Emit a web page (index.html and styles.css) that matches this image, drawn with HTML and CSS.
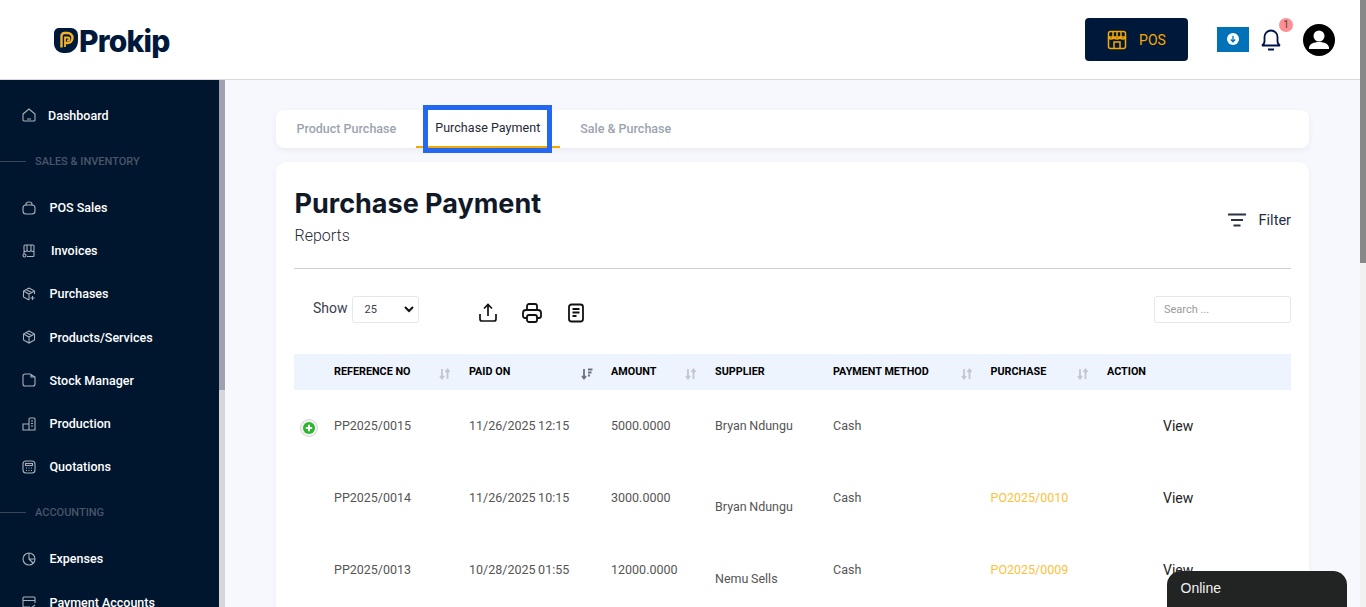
FILE: index.html
```html
<!DOCTYPE html>
<html lang="en">
<head>
    <meta charset="UTF-8">
    <title>Purchase Payment - Prokip</title>
    <link rel="stylesheet" href="styles.css">
</head>
<body>
<div class="page">
    <div class="app">
        <header class="topbar">
            <a class="logo">
                <svg class="logo-mark" width="24" height="25" viewBox="0 0 24 25">
                    <path d="M5 0h12a7 7 0 0 1 7 7v6a12 12 0 0 1-12 12h-3a9 9 0 0 1-9-9V5a5 5 0 0 1 5-5z" fill="#00193a"/>
                    <path d="M7.500 19.500V8a3 3 0 0 1 3-3H13.500a5 5 0 0 1 0 10H11" fill="none" stroke="#f5b324" stroke-width="2.400"/>
                    <path d="M11 19v-9.500h3a1.500 1.500 0 0 1 0 3h-1" fill="none" stroke="#f5b324" stroke-width="1.800"/>
                </svg>
                <span class="logo-text">Prokip</span>
            </a>
            <div class="topbar-right">
                <button class="pos-btn">
                    <svg width="20" height="20" viewBox="0 0 20 20" fill="none" stroke="#f5a800" stroke-width="1.500">
                        <rect x="1.500" y="1.500" width="17" height="17" rx="2"/>
                        <path d="M1.500 7h17M6 2v5M10 2v5M14 2v5M1.500 7c0 2.500 5.500 2.500 5.500 0 0 2.500 6 2.500 6 0 0 2.500 5.500 2.500 5.500 0M7 18v-6h6v6"/>
                    </svg>
                    <span>POS</span>
                </button>
                <div class="download-btn">
                    <svg width="12" height="12" viewBox="0 0 12 12">
                        <circle cx="6" cy="6" r="6" fill="#fff"/>
                        <path d="M6 2.800v6M3.800 6.500 6 8.800l2.200-2.300" fill="none" stroke="#0272b8" stroke-width="1.300"/>
                    </svg>
                </div>
                <div class="bell">
                    <svg width="20" height="22" viewBox="0 0 20 22" fill="none" stroke="#00124a" stroke-width="1.800">
                        <path d="M1 16.500h18c-2-1-2.500-2.500-2.500-4.500V8a6.500 6.500 0 0 0-13 0v4c0 2-.5 3.500-2.500 4.500zM7 20.500h6"/>
                    </svg>
                    <span class="badge">1</span>
                </div>
                <svg class="avatar" width="32" height="32" viewBox="0 0 32 32">
                    <circle cx="16" cy="16" r="16" fill="#000"/>
                    <circle cx="16" cy="12" r="5.500" fill="#fff"/>
                    <path d="M6 24c0-4 5-6 10-6s10 2 10 6v1H6z" fill="#fff"/>
                </svg>
            </div>
        </header>
        <div class="body">
            <nav class="sidebar">
                <a class="nav-item nav-first">
                    <svg class="nav-icon" viewBox="0 0 14 14"><path d="M1 6l6-5 6 5v6a1 1 0 0 1-1 1H2a1 1 0 0 1-1-1zM5 11h4"/></svg>
                    <span class="nav-dash">Dashboard</span>
                </a>
                <div class="nav-section"><i></i><span>SALES &amp; INVENTORY</span></div>
                <a class="nav-item">
                    <svg class="nav-icon" viewBox="0 0 14 14"><rect x="1" y="4" width="12" height="9" rx="3"/><path d="M4 4.500V3a3 2 0 0 1 6 0v1.500"/></svg>
                    <span>POS Sales</span>
                </a>
                <a class="nav-item">
                    <svg class="nav-icon" viewBox="0 0 14 14"><path d="M2 6V2a1 1 0 0 1 1-1h8a1 1 0 0 1 1 1v4c0 2-3 2-3 0 0 2-4 2-4 0 0 2-3 2-3 0zM2 7v3M5 12.500h6a1 1 0 0 0 1-1V7M5 1v5M9 1v5"/><circle cx="2.500" cy="11.500" r="1.500"/></svg>
                    <span class="nav-inv">Invoices</span>
                </a>
                <a class="nav-item">
                    <svg class="nav-icon" viewBox="0 0 14 14"><path d="M7 1l5.500 3v3M7 1L1.500 4v6L7 13M1.500 4 7 7l5.500-3M7 7v6M4 2.500l5.500 3M10.500 9v4M8.500 11h4"/></svg>
                    <span>Purchases</span>
                </a>
                <a class="nav-item">
                    <svg class="nav-icon" viewBox="0 0 14 14"><path d="M7 1l5.500 3v6L7 13l-5.500-3V4zM1.500 4 7 7l5.500-3M7 7v6M4 2.500l5.500 3"/></svg>
                    <span>Products/Services</span>
                </a>
                <a class="nav-item">
                    <svg class="nav-icon" viewBox="0 0 14 14"><path d="M3 1h5l5 3v7a2 2 0 0 1-2 2H3a2 2 0 0 1-2-2V3a2 2 0 0 1 2-2zM9 1v3h4"/></svg>
                    <span>Stock Manager</span>
                </a>
                <a class="nav-item">
                    <svg class="nav-icon" viewBox="0 0 14 14"><path d="M7 13V2a1 1 0 0 1 1-1h4a1 1 0 0 1 1 1v11H1V7h6M9 4h2M9 6.500h2M9 9h2"/></svg>
                    <span>Production</span>
                </a>
                <a class="nav-item">
                    <svg class="nav-icon" viewBox="0 0 14 14"><rect x="1" y="1" width="12" height="12" rx="3"/><rect x="3.500" y="3.500" width="7" height="2"/><path d="M4 8h1M6.500 8h1M9 8h1M4 10.500h1M6.500 10.500h1M9 10.500h1"/></svg>
                    <span>Quotations</span>
                </a>
                <div class="nav-section"><i></i><span>ACCOUNTING</span></div>
                <a class="nav-item">
                    <svg class="nav-icon" viewBox="0 0 14 14"><circle cx="7" cy="7" r="6"/><path d="M7 1v6h6M7 7l4 4"/></svg>
                    <span>Expenses</span>
                </a>
                <a class="nav-item">
                    <svg class="nav-icon" viewBox="0 0 14 14"><path d="M8 12H2a1 1 0 0 1-1-1V3a1 1 0 0 1 1-1h10a1 1 0 0 1 1 1v5M1 5.500h12M9 13l4-3"/></svg>
                    <span>Payment Accounts</span>
                </a>
            </nav>
            <div class="side-scroll"><div class="side-thumb"></div></div>
            <main class="content">
                <div class="tabs">
                    <a class="tab">Product Purchase</a>
                    <a class="tab tab-active">Purchase Payment<span class="focus-box"></span></a>
                    <a class="tab">Sale &amp; Purchase</a>
                </div>
                <section class="card">
                    <div class="card-head">
                        <div class="card-title">
                            <h1>Purchase Payment</h1>
                            <p class="sub">Reports</p>
                        </div>
                        <a class="filter">
                            <svg width="18" height="14" viewBox="0 0 18 14" fill="none" stroke="#2b3445" stroke-width="1.800">
                                <path d="M0 1.500h18M3 7h12M5.500 12.500h7"/>
                            </svg>
                            <span>Filter</span>
                        </a>
                    </div>
                    <div class="toolbar">
                        <div class="show">
                            <span>Show</span>
                            <div class="select">25
                                <svg width="10" height="7" viewBox="0 0 10 7" fill="none" stroke="#111" stroke-width="2"><path d="M1 1l4 4 4-4"/></svg>
                            </div>
                        </div>
                        <div class="tools">
                            <svg width="22" height="22" viewBox="0 0 22 22" fill="none" stroke="#111" stroke-width="1.700">
                                <path d="M11 14V3M7 6.500 11 2.500l4 4M3 12v5a2 2 0 0 0 2 2h12a2 2 0 0 0 2-2v-5"/>
                            </svg>
                            <svg width="22" height="22" viewBox="0 0 22 22" fill="none" stroke="#111" stroke-width="1.800">
                                <path d="M6 8V4a2 2 0 0 1 2-2h6a2 2 0 0 1 2 2v4M6 16H4a2 2 0 0 1-2-2v-3a3 3 0 0 1 3-3h12a3 3 0 0 1 3 3v3a2 2 0 0 1-2 2h-2"/>
                                <rect x="6" y="13" width="10" height="7" rx="2"/>
                            </svg>
                            <svg width="22" height="22" viewBox="0 0 22 22" fill="none" stroke="#111" stroke-width="1.800">
                                <rect x="4" y="2.500" width="14" height="17" rx="2.500"/>
                                <path d="M7.500 7h7M7.500 10.500h7M7.500 14h4"/>
                            </svg>
                        </div>
                        <input class="search" type="text" placeholder="Search ...">
                    </div>
                    <table class="report">
                        <colgroup>
                            <col class="c-exp"><col class="c-ref"><col class="c-paid"><col class="c-amt">
                            <col class="c-sup"><col class="c-met"><col class="c-pur"><col class="c-act">
                        </colgroup>
                        <thead>
                            <tr>
                                <th></th>
                                <th>REFERENCE NO<svg class="sort" viewBox="0 0 12 12"><path d="M3 1v9M1 8l2 2.500L5 8M8.500 11V2M6.500 4l2-2.500 2 2.500"/></svg></th>
                                <th>PAID ON<svg class="sort sort-on" viewBox="0 0 12 12"><path d="M3 1v9M1 8l2 2.500L5 8M7 1.500h4.500M7 4.500h3.500M7 7.500h2"/></svg></th>
                                <th>AMOUNT<svg class="sort" viewBox="0 0 12 12"><path d="M3 1v9M1 8l2 2.500L5 8M8.500 11V2M6.500 4l2-2.500 2 2.500"/></svg></th>
                                <th>SUPPLIER</th>
                                <th>PAYMENT METHOD<svg class="sort" viewBox="0 0 12 12"><path d="M3 1v9M1 8l2 2.500L5 8M8.500 11V2M6.500 4l2-2.500 2 2.500"/></svg></th>
                                <th>PURCHASE<svg class="sort" viewBox="0 0 12 12"><path d="M3 1v9M1 8l2 2.500L5 8M8.500 11V2M6.500 4l2-2.500 2 2.500"/></svg></th>
                                <th>ACTION</th>
                            </tr>
                        </thead>
                        <tbody>
                            <tr>
                                <td class="exp">
                                    <svg class="plus" width="18" height="18" viewBox="0 0 18 18">
                                        <circle cx="9" cy="9" r="8.500" fill="#f2f2f2" stroke="#d6d6d6"/>
                                        <circle cx="9" cy="9" r="6" fill="#2db52d"/>
                                        <path d="M9 5.800v6.400M5.800 9h6.400" stroke="#fff" stroke-width="2"/>
                                    </svg>
                                </td>
                                <td>PP2025/0015</td>
                                <td>11/26/2025 12:15</td>
                                <td>5000.0000</td>
                                <td>Bryan Ndungu</td>
                                <td>Cash</td>
                                <td></td>
                                <td class="view">View</td>
                            </tr>
                            <tr>
                                <td></td>
                                <td>PP2025/0014</td>
                                <td>11/26/2025 10:15</td>
                                <td>3000.0000</td>
                                <td class="low">Bryan Ndungu</td>
                                <td>Cash</td>
                                <td class="po">PO2025/0010</td>
                                <td class="view">View</td>
                            </tr>
                            <tr>
                                <td></td>
                                <td>PP2025/0013</td>
                                <td>10/28/2025 01:55</td>
                                <td>12000.0000</td>
                                <td class="low">Nemu Sells</td>
                                <td>Cash</td>
                                <td class="po">PO2025/0009</td>
                                <td class="view">View</td>
                            </tr>
                        </tbody>
                    </table>
                </section>
            </main>
        </div>
    </div>
    <div class="page-scroll"><div class="page-thumb"></div></div>
</div>
<div class="chat">Online</div>
</body>
</html>
```

FILE: styles.css
```css
* {
    box-sizing: border-box;
}

html, body {
    margin: 0;
    height: 100%;
    overflow: hidden;
}

body {
    font-family: 'Roboto', sans-serif;
    background-color: #f7f8fd;
    color: #111;
}

.page {
    display: flex;
    height: 607px;
    overflow: hidden;
}

.app {
    flex: 1;
    min-width: 0;
    display: flex;
    flex-direction: column;
}

.page-scroll {
    width: 6px;
    background-color: #f1f1f1;
}

.page-thumb {
    height: 263px;
    background-color: #888;
}

/* top bar */
.topbar {
    height: 80px;
    flex-shrink: 0;
    background: #fff;
    border-bottom: 1px solid #d8d9de;
    display: flex;
    justify-content: space-between;
    align-items: center;
    padding: 0 25px 0 54px;
}

.logo {
    display: flex;
    align-items: center;
    gap: 1px;
    margin-top: 2px;
}

.logo-text {
    font-family: 'Inter', sans-serif;
    font-weight: 800;
    font-size: 30px;
    letter-spacing: -0.8px;
    color: #00193a;
}

.topbar-right {
    display: flex;
    align-items: center;
}

.pos-btn {
    width: 103px;
    height: 43px;
    background-color: #00193a;
    border: none;
    border-radius: 4px;
    color: #f5a800;
    font-family: 'Roboto', sans-serif;
    font-size: 14px;
    display: flex;
    align-items: center;
    justify-content: center;
    gap: 12px;
    padding: 0;
    margin-right: 29px;
}

.download-btn {
    width: 32px;
    height: 25px;
    background-color: #0272b8;
    display: flex;
    align-items: center;
    justify-content: center;
    padding-bottom: 2px;
    margin-right: 12px;
}

.bell {
    position: relative;
    width: 20px;
    height: 22px;
    margin-right: 22px;
}

.badge {
    position: absolute;
    top: -11px;
    left: 18px;
    width: 14px;
    height: 14px;
    border-radius: 50%;
    background-color: #ff8f92;
    color: #444;
    font-size: 10px;
    line-height: 14px;
    text-align: center;
}

/* sidebar */
.body {
    flex: 1;
    min-height: 0;
    display: flex;
}

.sidebar {
    width: 219px;
    flex-shrink: 0;
    background-color: #00162f;
    overflow: hidden;
    padding-top: 13.800px;
}

.nav-item {
    display: flex;
    align-items: center;
    height: 43.200px;
    padding-left: 22px;
    color: #fff;
    font-size: 12.500px;
    font-weight: 500;
}

.nav-item span {
    margin-left: 13.500px;
}

.nav-item .nav-dash {
    margin-left: 12px;
}

.nav-item .nav-inv {
    margin-left: 15px;
}

.nav-icon {
    width: 14px;
    height: 14px;
    flex-shrink: 0;
    fill: none;
    stroke: #a9afb9;
    stroke-width: 1.100;
}

.nav-section {
    display: flex;
    align-items: center;
    height: 49px;
    color: #4a5568;
    font-size: 11px;
    font-weight: 500;
}

.nav-section i {
    width: 26px;
    height: 1px;
    background-color: #3a4658;
    margin-right: 9px;
}

.side-scroll {
    width: 6px;
    flex-shrink: 0;
    background-color: #d5d7dd;
}

.side-thumb {
    height: 310px;
    background-color: #9fa2ae;
}

/* content */
.content {
    flex: 1;
    min-width: 0;
    padding: 30px 51px 0;
}

.tabs {
    height: 38px;
    background: #fff;
    border-radius: 8px;
    box-shadow: 0 2px 6px rgba(0, 0, 0, 0.06);
    display: flex;
    font-size: 12.500px;
    color: #9ca3af;
    padding-left: 1px;
}

.tab {
    height: 38px;
    line-height: 37px;
    padding: 0 19.500px;
    font-weight: 500;
}

.tab-active {
    position: relative;
    color: #1f2937;
    font-weight: 400;
    border-bottom: 2px solid #f5a800;
    line-height: 35px;
    padding-right: 19px;
    letter-spacing: 0.05px;
    margin-right: 1px;
    width: 144px;
}

.focus-box {
    position: absolute;
    left: 7px;
    top: -5px;
    width: 129px;
    height: 48px;
    border: 5px solid #2468f2;
}

.card {
    margin-top: 14px;
    background: #fff;
    border-radius: 10px;
    box-shadow: 0 2px 6px rgba(0, 0, 0, 0.04);
    padding: 0 18px;
    height: 500px;
}

.card-head {
    height: 107px;
    padding-top: 3px;
    border-bottom: 1px solid #d0d1d6;
    display: flex;
    justify-content: space-between;
    align-items: center;
}

.card-title {
    padding-left: 0.500px;
}

h1 {
    margin: 0;
    font-family: 'Inter', sans-serif;
    font-weight: 700;
    font-size: 27px;
    line-height: 33px;
    color: #111827;
}

.sub {
    margin: 6px 0 0;
    font-size: 16px;
    font-weight: 300;
    line-height: 20px;
    color: #1f2937;
}

.filter {
    display: flex;
    align-items: center;
    gap: 13px;
    font-size: 14.500px;
    color: #1f2d45;
    margin-top: 7px;
}

.toolbar {
    height: 85px;
    display: flex;
    align-items: center;
    padding: 0 0 5px 19px;
}

.show {
    display: flex;
    align-items: center;
    gap: 4px;
    font-size: 14px;
    color: #374151;
    width: 164px;
}

.show > span {
    margin-top: -2px;
}

.select {
    width: 67px;
    height: 27px;
    border: 1px solid #e5e7eb;
    border-radius: 3px;
    font-size: 11px;
    display: flex;
    align-items: center;
    justify-content: space-between;
    padding: 0 4px 0 12px;
}

.tools {
    display: flex;
    gap: 22px;
    flex: 1;
    margin-top: 7px;
}

.search {
    width: 137px;
    height: 27px;
    border: 1px solid #e5e7eb;
    border-radius: 3px;
    padding: 0 9px;
    font-family: 'Roboto', sans-serif;
    font-size: 11px;
}

.search::placeholder {
    color: #9b9b9b;
}

.report {
    width: 997px;
    table-layout: fixed;
    border-collapse: collapse;
}

.c-exp { width: 40px; }
.c-ref { width: 135px; }
.c-paid { width: 142px; }
.c-amt { width: 104px; }
.c-sup { width: 118px; }
.c-met { width: 157.500px; }
.c-pur { width: 116.500px; }
.c-act { width: 184px; }

.report thead tr {
    background-color: #edf4fe;
}

.report th {
    position: relative;
    height: 36px;
    padding: 0 0 1px;
    text-align: left;
    font-size: 10.800px;
    font-weight: 700;
    color: #000;
}

.sort {
    position: absolute;
    right: 18px;
    top: 14px;
    width: 12px;
    height: 12px;
    fill: none;
    stroke: #c3c7cd;
    stroke-width: 1.800;
}

.sort-on {
    stroke: #6b7280;
}

.report td {
    height: 72px;
    padding: 0 0 2px;
    font-size: 12.500px;
    word-spacing: -0.5px;
    font-weight: 400;
    color: #555;
}

.report td.low {
    padding-top: 19px;
}

.report td.po {
    color: #fdc13c;
}

.report td.view {
    padding: 0 0 0 56px;
    font-size: 14px;
    color: #222;
}

.report td.exp {
    padding: 4px 0 0 6px;
}

.plus {
    display: block;
}

.chat {
    position: fixed;
    left: 1167px;
    top: 571px;
    width: 180px;
    height: 36px;
    background-color: #222423;
    border-radius: 14px 14px 0 0;
    color: #f0f0f0;
    font-family: 'Liberation Sans', sans-serif;
    font-size: 14px;
    line-height: 34px;
    padding-left: 13.500px;
}
```
